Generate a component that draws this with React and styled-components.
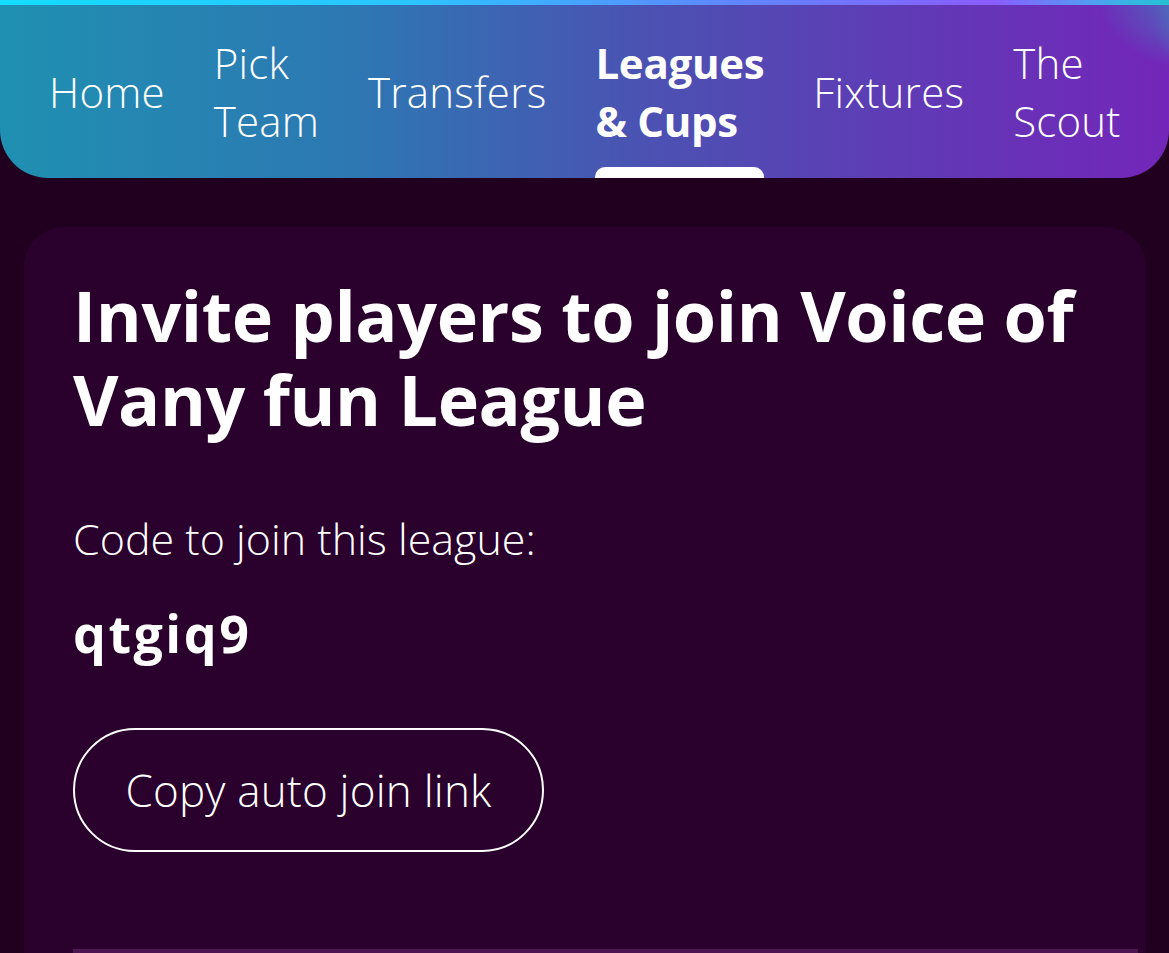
import React from "react";
import styled, { createGlobalStyle } from "styled-components";

const Global = createGlobalStyle`
  html, body { margin: 0; padding: 0; background: #21001f; }
  body { font-family: "Open Sans", "Noto Sans", sans-serif; color: #fff; overflow: hidden; }
  * { box-sizing: border-box; }
`;

const Page = styled.div`
  width: 1169px;
  height: 953px;
  overflow: hidden;
  background: #21001f;
`;

const Header = styled.header`
  position: relative;
  height: 178px;
  border-radius: 0 0 48px 48px;
  background: linear-gradient(90deg, #1f90b1 0%, #2d78b3 30%, #4b52b2 55%, #6238b6 80%, #7326b9 100%);
  overflow: hidden;
`;

const Strip = styled.div`
  height: 5px;
  background: linear-gradient(90deg, #14dcfb 0%, #2bc4ff 35%, #5a8cff 60%, #8a5cff 85%, #24d2e6 100%);
`;

const Swirl = styled.div`
  position: absolute;
  top: -40px;
  right: -60px;
  width: 230px;
  height: 160px;
  pointer-events: none;
  background:
    radial-gradient(ellipse 60% 70% at 85% 20%, rgba(40, 170, 190, 0.65), rgba(40, 170, 190, 0) 70%),
    radial-gradient(ellipse 40% 50% at 95% 40%, rgba(30, 200, 210, 0.5), rgba(30, 200, 210, 0) 70%);
`;

const Nav = styled.nav`
  position: relative;
  display: flex;
  align-items: center;
  gap: 49px;
  height: 173px;
  padding-left: 49px;
`;

const NavItem = styled.a`
  position: relative;
  display: flex;
  align-items: center;
  height: 100%;
  font-size: 42px;
  line-height: 58px;
  font-weight: ${(p) => (p.$active ? 700 : 300)};
  letter-spacing: ${(p) => (p.$active ? "-0.3px" : "0.2px")};
  color: #fff;
  text-decoration: none;
  white-space: nowrap;
`;

const Underline = styled.span`
  position: absolute;
  left: 0;
  right: 0;
  bottom: 0;
  height: 11px;
  border-radius: 10px 10px 0 0;
  background: #fff;
`;

const Card = styled.section`
  margin: 49px 23px 0 24px;
  height: 726px;
  border-radius: 40px 40px 0 0;
  background: #2a002d;
  padding: 46px 48px 0 49px;
  display: flex;
  flex-direction: column;
  align-items: flex-start;
`;

const Title = styled.h1`
  margin: 0;
  font-size: 70px;
  line-height: 84px;
  font-weight: 700;
  letter-spacing: -0.4px;
`;

const Label = styled.p`
  margin: 72px 0 0;
  font-size: 43px;
  line-height: 52px;
  font-weight: 300;
`;

const Code = styled.p`
  margin: 35px 0 0;
  font-size: 52px;
  line-height: 66px;
  font-weight: 700;
  letter-spacing: 2.5px;
`;

const OutlineButton = styled.button`
  margin-top: 62px;
  width: 471px;
  height: 124px;
  border: 2.5px solid #fff;
  border-radius: 62px;
  background: transparent;
  color: #fff;
  font-family: inherit;
  font-size: 44px;
  font-weight: 300;
  letter-spacing: 0.2px;
  cursor: pointer;
`;

const Divider = styled.div`
  margin-top: auto;
  align-self: stretch;
  height: 4px;
  margin-right: -40px;
  background: #4c1552;
`;

const links = [
  { lines: ["Home"] },
  { lines: ["Pick", "Team"] },
  { lines: ["Transfers"] },
  { lines: ["Leagues", "& Cups"], active: true },
  { lines: ["Fixtures"] },
  { lines: ["The", "Scout"] },
];

export default function App() {
  return (
    <Page>
      <Global />
      <Header>
        <Strip />
        <Swirl />
        <Nav>
          {links.map((l, i) => (
            <NavItem key={i} href="#" $active={l.active}>
              <span>
                {l.lines.map((t, j) => (
                  <React.Fragment key={j}>
                    {j > 0 && <br />}
                    {t}
                  </React.Fragment>
                ))}
              </span>
              {l.active && <Underline />}
            </NavItem>
          ))}
        </Nav>
      </Header>
      <Card>
        <Title>
          Invite players to join Voice of
          <br />
          Vany fun League
        </Title>
        <Label>Code to join this league:</Label>
        <Code>qtgiq9</Code>
        <OutlineButton type="button">Copy auto join link</OutlineButton>
        <Divider />
      </Card>
    </Page>
  );
}
